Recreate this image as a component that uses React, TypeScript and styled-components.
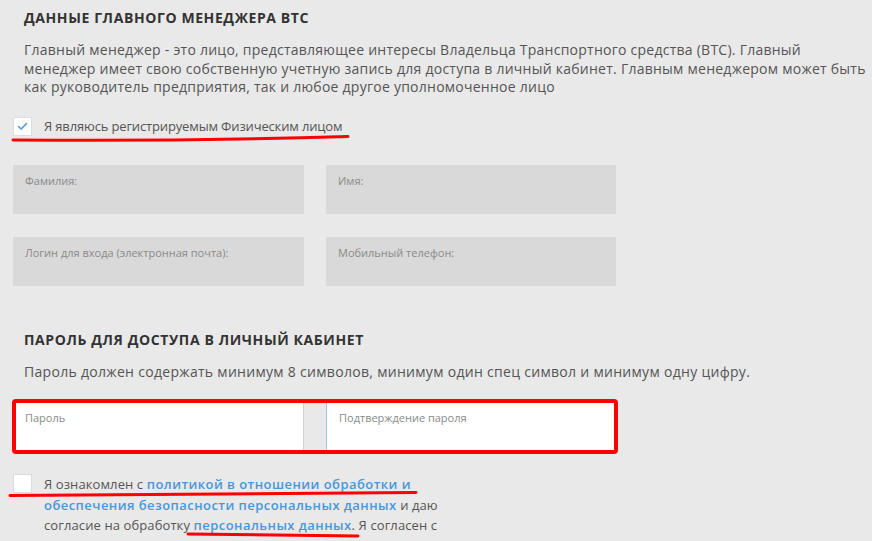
import React from 'react';
import styled, { createGlobalStyle } from 'styled-components';

const GlobalStyle = createGlobalStyle`
  html, body {
    margin: 0;
    padding: 0;
    background: #e9e9e9;
  }
  body {
    font-family: 'Open Sans', 'Noto Sans', sans-serif;
    color: #555;
  }
`;

const Page = styled.div`
  width: 872px;
  height: 541px;
  overflow: hidden;
  box-sizing: border-box;
  padding: 8px 0 0 13px;
  background: #e9e9e9;
`;

const Title = styled.h2<{ $top?: number }>`
  margin: ${(p) => p.$top || 0}px 0 0 11px;
  font-size: 14px;
  line-height: 20px;
  font-weight: 700;
  color: #333;
  letter-spacing: 0.6px;
`;

const Lead = styled.p<{ $top: number; $spacing: number }>`
  margin: ${(p) => p.$top}px 0 0 11px;
  white-space: nowrap;
  font-size: 14px;
  line-height: 18.5px;
  letter-spacing: ${(p) => p.$spacing}px;
  color: #555;
`;

const CheckRow = styled.div<{ $top: number }>`
  position: relative;
  margin-top: ${(p) => p.$top}px;
  display: flex;
  align-items: flex-start;
  gap: 12px;
`;

const Box = styled.span`
  flex: none;
  width: 19px;
  height: 19px;
  box-sizing: border-box;
  background: #fff;
  border: 1px solid #dcdcdc;
  display: flex;
  align-items: center;
  justify-content: center;
`;

const CheckLabel = styled.span`
  font-size: 13px;
  line-height: 19px;
  letter-spacing: -0.15px;
  color: #555;
`;

const FieldGrid = styled.div<{ $top: number }>`
  position: relative;
  margin-top: ${(p) => p.$top}px;
  width: 603px;
  display: grid;
  grid-template-columns: 291px 290px;
  column-gap: 22px;
  row-gap: 23px;
`;

const Field = styled.div<{ $white?: boolean; $focused?: boolean }>`
  height: 49px;
  box-sizing: border-box;
  padding: 9px 12px;
  background: ${(p) => (p.$white ? '#fff' : '#d9d9d9')};
  border-left: ${(p) => (p.$focused ? '1px solid #9cc4e8' : 'none')};
  border-right: ${(p) => (p.$white && !p.$focused ? '1px solid #d2d2d2' : 'none')};
  font-size: 11px;
  line-height: 14px;
  color: #8a8a8a;
`;

const Highlight = styled.div`
  position: absolute;
  left: -1px;
  right: -2px;
  top: -3px;
  bottom: -3px;
  border: 4px solid #ff0000;
  border-radius: 4px;
  pointer-events: none;
`;

const Consent = styled.div`
  font-size: 13px;
  line-height: 20.5px;
  color: #555;
  letter-spacing: 0.1px;
  white-space: nowrap;
`;

const Link = styled.a`
  color: #4797dc;
  font-weight: 600;
  text-decoration: none;
  letter-spacing: 0.45px;
`;

const Marker = styled.svg`
  position: absolute;
  left: 0;
  top: 0;
  overflow: visible;
  pointer-events: none;
`;

const Check = () => (
  <svg width="11" height="9" viewBox="0 0 11 9">
    <path d="M1.5 4.5 L4.2 7 L9.5 1.5" fill="none" stroke="#4f97d8" strokeWidth="1.6" strokeLinecap="round" strokeLinejoin="round" />
  </svg>
);

const App: React.FC = () => (
  <>
    <GlobalStyle />
    <Page>
      <Title>ДАННЫЕ ГЛАВНОГО МЕНЕДЖЕРА ВТС</Title>
      <Lead $top={13} $spacing={0.25}>
        Главный менеджер - это лицо, представляющее интересы Владельца Транспортного средства (ВТС). Главный
        <br />
        менеджер имеет свою собственную учетную запись для доступа в личный кабинет. Главным менеджером может быть
        <br />
        как руководитель предприятия, так и любое другое уполномоченное лицо
      </Lead>
      <CheckRow $top={20}>
        <Box>
          <Check />
        </Box>
        <CheckLabel>Я являюсь регистрируемым Физическим лицом</CheckLabel>
        <Marker width="340" height="30">
          <path d="M0 23 Q170 24.5 335 19.5" fill="none" stroke="#ff0000" strokeWidth="3" strokeLinecap="round" />
        </Marker>
      </CheckRow>
      <FieldGrid $top={29}>
        <Field>Фамилия:</Field>
        <Field>Имя:</Field>
        <Field>Логин для входа (электронная почта):</Field>
        <Field>Мобильный телефон:</Field>
      </FieldGrid>
      <Title $top={44}>ПАРОЛЬ ДЛЯ ДОСТУПА В ЛИЧНЫЙ КАБИНЕТ</Title>
      <Lead $top={13} $spacing={0.3}>
        Пароль должен содержать минимум 8 символов, минимум один спец символ и минимум одну цифру.
      </Lead>
      <FieldGrid $top={21}>
        <Field $white>Пароль</Field>
        <Field $white $focused>
          Подтверждение пароля
        </Field>
        <Highlight />
      </FieldGrid>
      <CheckRow $top={23}>
        <Box />
        <Consent>
          Я ознакомлен с <Link>политикой в отношении обработки и</Link>
          <br />
          <Link>обеспечения безопасности персональных данных</Link> и даю
          <br />
          согласие на обработку <Link>персональных данных</Link>. Я согласен с
        </Consent>
        <Marker width="420" height="70">
          <path d="M-3 21.5 Q200 20 403 18.5" fill="none" stroke="#ff0000" strokeWidth="3" strokeLinecap="round" />
          <path d="M175 60 Q260 61 345 62" fill="none" stroke="#ff0000" strokeWidth="3" strokeLinecap="round" />
        </Marker>
      </CheckRow>
    </Page>
  </>
);

export default App;
